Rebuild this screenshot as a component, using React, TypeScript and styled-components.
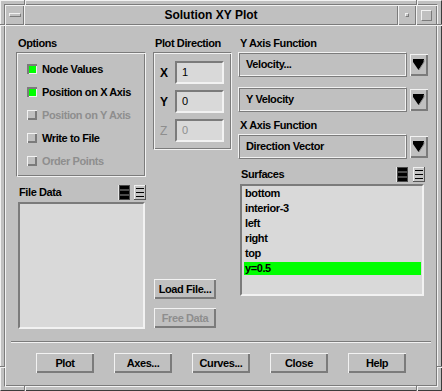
import React from "react";
import styled, { createGlobalStyle } from "styled-components";

const light = "#f2f2f2";
const dark = "#7b7b7b";
const face = "#c0c0c0";
const well = "#d9d9d9";
const grey = "#8e8e8e";

const GlobalStyle = createGlobalStyle`
  html, body {
    margin: 0;
    padding: 0;
    background: ${face};
  }
`;

const Window = styled.div`
  position: relative;
  box-sizing: border-box;
  width: 442px;
  height: 391px;
  padding: 3px;
  background: ${face};
  border: 1px solid;
  border-color: ${light} #3c3c3c #3c3c3c ${light};
  display: flex;
  font: bold 11px "Liberation Sans", Arial, sans-serif;
  letter-spacing: -0.4px;
  color: #000;
`;

const NotchV = styled.span<{ $left: number; $bottom?: boolean }>`
  position: absolute;
  left: ${(p) => p.$left}px;
  ${(p) => (p.$bottom ? "bottom: -1px;" : "top: -1px;")}
  width: 0;
  height: 5px;
  border-left: 1px solid ${dark};
  border-right: 1px solid ${light};
`;

const NotchH = styled.span<{ $top: number; $right?: boolean }>`
  position: absolute;
  top: ${(p) => p.$top}px;
  ${(p) => (p.$right ? "right: -1px;" : "left: -1px;")}
  width: 5px;
  height: 0;
  border-top: 1px solid ${dark};
  border-bottom: 1px solid ${light};
`;

const Inner = styled.div`
  flex: 1;
  display: flex;
  flex-direction: column;
  border: 1px solid;
  border-color: ${dark} ${light} ${light} ${dark};
`;

const TitleBar = styled.div`
  display: flex;
  height: 20px;
`;

const raised = `
  box-shadow: inset 1px 1px 0 ${light}, inset -1px -1px 0 ${dark};
`;

const TitleButton = styled.div<{ $w: number }>`
  width: ${(p) => p.$w}px;
  display: flex;
  align-items: center;
  justify-content: center;
  ${raised}
`;

const MenuBar = styled.span`
  width: 10px;
  height: 2px;
  border: 1px solid;
  border-color: ${light} ${dark} ${dark} ${light};
`;

const MinMark = styled.span`
  width: 2px;
  height: 2px;
  border: 1px solid;
  border-color: ${light} ${dark} ${dark} ${light};
`;

const MaxMark = styled.span`
  width: 9px;
  height: 9px;
  border: 1px solid;
  border-color: ${light} ${dark} ${dark} ${light};
`;

const Title = styled.div`
  flex: 1;
  display: flex;
  align-items: center;
  justify-content: center;
  font-size: 12px;
  letter-spacing: 0;
  ${raised}
`;

const Content = styled.div`
  flex: 1;
  display: flex;
  flex-direction: column;
  padding: 9px 0 11px;
  ${raised}
`;

const Columns = styled.div`
  display: flex;
  padding-left: 11px;
`;

const Column = styled.div<{ $w: number; $ml?: number }>`
  width: ${(p) => p.$w}px;
  margin-left: ${(p) => p.$ml ?? 0}px;
  display: flex;
  flex-direction: column;
`;

const Label = styled.div<{ $mt?: number }>`
  height: 18px;
  line-height: 18px;
  padding-left: 2px;
  margin-top: ${(p) => p.$mt ?? 0}px;
  white-space: nowrap;
`;

const Etched = styled.div`
  border: 1px solid;
  border-color: ${dark} ${light} ${light} ${dark};
  box-shadow: inset 1px 1px 0 ${light}, inset -1px -1px 0 ${dark};
`;

const OptionsFrame = styled(Etched)`
  height: 125px;
  box-sizing: border-box;
  padding: 4px 0 4px 10px;
`;

const OptionRow = styled.div<{ $disabled?: boolean }>`
  height: 23px;
  display: flex;
  align-items: center;
  gap: 5px;
  color: ${(p) => (p.$disabled ? grey : "#000")};
  white-space: nowrap;
`;

const Check = styled.span<{ $on: boolean }>`
  width: 10px;
  height: 10px;
  box-sizing: border-box;
  flex: none;
  background: ${(p) => (p.$on ? "#00ff00" : face)};
  box-shadow: ${(p) =>
    p.$on
      ? `inset 2px 2px 0 ${dark}, inset -1px -1px 0 ${light}`
      : `inset 1px 1px 0 ${light}, inset -2px -2px 0 ${dark}`};
`;

const ListHeader = styled.div<{ $mt: number; $w?: number }>`
  box-sizing: border-box;
  width: ${(p) => (p.$w ? `${p.$w}px` : "auto")};
  height: 18px;
  margin-top: ${(p) => p.$mt}px;
  display: flex;
  align-items: center;
  justify-content: space-between;
  padding-left: 3px;
`;

const IconPair = styled.div<{ $gap: number }>`
  display: flex;
  gap: ${(p) => p.$gap}px;
`;

const ListBox = styled.div<{ $w: number; $h: number; $ml: number }>`
  box-sizing: border-box;
  width: ${(p) => p.$w}px;
  height: ${(p) => p.$h}px;
  margin: 1px 0 0 ${(p) => p.$ml}px;
  background: ${well};
  border: 2px solid;
  border-color: ${dark} ${light} ${light} ${dark};
  display: flex;
  flex-direction: column;
`;

const ListItem = styled.div<{ $selected?: boolean }>`
  height: 13px;
  line-height: 13px;
  margin: 1px 1px 1px 2px;
  padding-left: 1px;
  background: ${(p) => (p.$selected ? "#00ff00" : "transparent")};
`;

const DirFrame = styled(Etched)`
  box-sizing: border-box;
  height: 98px;
  padding: 8px 0 0 5px;
  display: flex;
  flex-direction: column;
  gap: 6px;
`;

const DirRow = styled.div<{ $disabled?: boolean }>`
  display: flex;
  align-items: center;
  color: ${(p) => (p.$disabled ? grey : "#000")};
  font-weight: ${(p) => (p.$disabled ? "normal" : "bold")};
  font-size: 12px;
`;

const AxisLetter = styled.span`
  width: 15px;
  padding-left: 1px;
`;

const Field = styled.div`
  box-sizing: border-box;
  width: 49px;
  height: 23px;
  line-height: 19px;
  padding-left: 5px;
  background: ${well};
  border: 2px solid;
  border-color: ${dark} ${light} ${light} ${dark};
  font-weight: normal;
  font-size: 11px;
`;

const SideButtons = styled.div`
  margin-top: auto;
  margin-bottom: 1px;
  display: flex;
  flex-direction: column;
  gap: 9px;
  padding-left: 1px;
`;

const PushButton = styled.button<{ $w: number; $disabled?: boolean }>`
  box-sizing: border-box;
  width: ${(p) => p.$w}px;
  height: 20px;
  padding: 0;
  border: none;
  background: ${face};
  font: inherit;
  letter-spacing: inherit;
  color: ${(p) => (p.$disabled ? grey : "#000")};
  box-shadow: inset 1px 1px 0 ${light}, inset -2px -2px 0 ${dark};
`;

const SelectRow = styled.div<{ $mt?: number }>`
  display: flex;
  align-items: center;
  gap: 3px;
  height: 25px;
  margin-top: ${(p) => p.$mt ?? 0}px;
`;

const SelectBox = styled.div`
  box-sizing: border-box;
  width: 169px;
  height: 25px;
  line-height: 23px;
  padding-left: 7px;
  border: 1px solid;
  border-color: ${light} ${dark} ${dark} ${light};
  box-shadow: inset 1px 1px 0 ${dark}, inset -1px -1px 0 ${light};
`;

const ArrowButton = styled.div`
  width: 18px;
  height: 22px;
  display: flex;
  align-items: center;
  justify-content: center;
  box-shadow: inset 1px 1px 0 ${light}, inset -2px -2px 0 ${dark};
`;

const Separator = styled.div`
  margin: 12px 6px 0;
  border-top: 1px solid ${dark};
  border-bottom: 1px solid ${light};
`;

const ButtonRow = styled.div`
  display: flex;
  justify-content: center;
  gap: 20px;
  margin-top: 10px;
`;

const DownArrow = () => (
  <svg width="12" height="12" viewBox="0 0 12 12">
    <polygon points="0,0 11,0 11,3 5.5,11 0,3" fill="#000" />
    <polyline points="11,1 11,3 6,11" fill="none" stroke="#8a8a8a" strokeWidth="1" />
  </svg>
);

const ViewIcon = ({ active }: { active?: boolean }) =>
  active ? (
    <svg width="12" height="15" viewBox="0 0 12 15">
      <rect width="12" height="15" fill="#4a4a4a" />
      <rect width="1" height="15" fill="#e8e8e8" />
      <rect x="2" y="1" width="9" height="3" fill="#000" />
      <rect x="2" y="6" width="9" height="3" fill="#000" />
      <rect x="2" y="11" width="9" height="3" fill="#000" />
    </svg>
  ) : (
    <svg width="12" height="15" viewBox="0 0 12 15">
      <rect width="12" height="15" fill="#555" />
      <rect width="11" height="14" fill="#f0f0f0" />
      <rect x="1" y="1" width="10" height="13" fill="#c4c4c4" />
      <rect x="2" y="3" width="8" height="1" fill="#000" />
      <rect x="2" y="7" width="8" height="1" fill="#000" />
      <rect x="2" y="11" width="8" height="1" fill="#000" />
    </svg>
  );

const options = [
  { label: "Node Values", on: true },
  { label: "Position on X Axis", on: true },
  { label: "Position on Y Axis", on: false, disabled: true },
  { label: "Write to File", on: false },
  { label: "Order Points", on: false, disabled: true },
];

const directions = [
  { axis: "X", value: "1" },
  { axis: "Y", value: "0" },
  { axis: "Z", value: "0", disabled: true },
];

const surfaces = ["bottom", "interior-3", "left", "right", "top", "y=0.5"];

const bottomButtons = ["Plot", "Axes...", "Curves...", "Close", "Help"];

const App: React.FC = () => (
  <>
    <GlobalStyle />
    <Window>
      <NotchV $left={23} />
      <NotchV $left={415} />
      <NotchV $left={23} $bottom />
      <NotchV $left={415} $bottom />
      <NotchH $top={23} />
      <NotchH $top={23} $right />
      <NotchH $top={365} />
      <NotchH $top={365} $right />
      <Inner>
        <TitleBar>
          <TitleButton $w={19}>
            <MenuBar />
          </TitleButton>
          <Title>Solution XY Plot</Title>
          <TitleButton $w={18}>
            <MinMark />
          </TitleButton>
          <TitleButton $w={21}>
            <MaxMark />
          </TitleButton>
        </TitleBar>
        <Content>
          <Columns>
            <Column $w={130}>
              <Label>Options</Label>
              <OptionsFrame>
                {options.map((o) => (
                  <OptionRow key={o.label} $disabled={o.disabled}>
                    <Check $on={o.on} />
                    {o.label}
                  </OptionRow>
                ))}
              </OptionsFrame>
              <ListHeader $mt={6}>
                File Data
                <IconPair $gap={4}>
                  <ViewIcon active />
                  <ViewIcon />
                </IconPair>
              </ListHeader>
              <ListBox $w={127} $h={127} $ml={2} />
            </Column>

            <Column $w={79} $ml={7}>
              <Label>Plot Direction</Label>
              <DirFrame>
                {directions.map((d) => (
                  <DirRow key={d.axis} $disabled={d.disabled}>
                    <AxisLetter>{d.axis}</AxisLetter>
                    <Field>{d.value}</Field>
                  </DirRow>
                ))}
              </DirFrame>
              <SideButtons>
                <PushButton $w={62}>Load File...</PushButton>
                <PushButton $w={62} $disabled>
                  Free Data
                </PushButton>
              </SideButtons>
            </Column>

            <Column $w={190} $ml={6}>
              <Label>Y Axis Function</Label>
              <SelectRow>
                <SelectBox>Velocity...</SelectBox>
                <ArrowButton>
                  <DownArrow />
                </ArrowButton>
              </SelectRow>
              <SelectRow $mt={10}>
                <SelectBox>Y Velocity</SelectBox>
                <ArrowButton>
                  <DownArrow />
                </ArrowButton>
              </SelectRow>
              <Label $mt={4}>X Axis Function</Label>
              <SelectRow>
                <SelectBox>Direction Vector</SelectBox>
                <ArrowButton>
                  <DownArrow />
                </ArrowButton>
              </SelectRow>
              <ListHeader $mt={6} $w={187}>
                Surfaces
                <IconPair $gap={5}>
                  <ViewIcon active />
                  <ViewIcon />
                </IconPair>
              </ListHeader>
              <ListBox $w={184} $h={112} $ml={2}>
                {surfaces.map((s) => (
                  <ListItem key={s} $selected={s === "y=0.5"}>
                    {s}
                  </ListItem>
                ))}
              </ListBox>
            </Column>
          </Columns>
          <Separator />
          <ButtonRow>
            {bottomButtons.map((b) => (
              <PushButton key={b} $w={58}>
                {b}
              </PushButton>
            ))}
          </ButtonRow>
        </Content>
      </Inner>
    </Window>
  </>
);

export default App;
